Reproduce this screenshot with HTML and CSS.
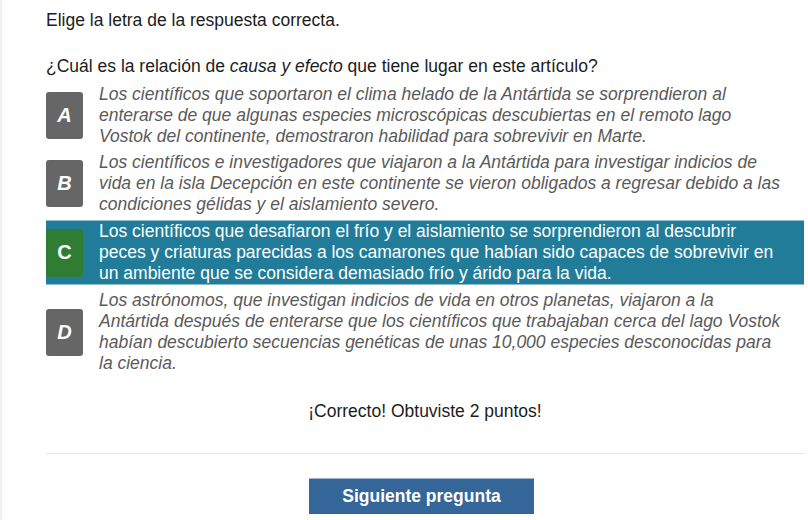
FILE: index.html
```html
<!DOCTYPE html>
<html lang="es">
<head>
<meta charset="utf-8">
<title>Pregunta</title>
<link rel="stylesheet" href="styles.css">
</head>
<body>
<div class="page">
  <p class="instr">Elige la letra de la respuesta correcta.</p>
  <p class="question">¿Cuál es la relación de <em>causa y efecto</em> que tiene lugar en este artículo?</p>
  <ul class="options">
    <li class="option">
      <span class="badge">A</span>
      <span class="text">Los científicos que soportaron el clima helado de la Antártida se sorprendieron al enterarse de que algunas especies microscópicas descubiertas en el remoto lago Vostok del continente, demostraron habilidad para sobrevivir en Marte.</span>
    </li>
    <li class="option">
      <span class="badge">B</span>
      <span class="text">Los científicos e investigadores que viajaron a la Antártida para investigar indicios de vida en la isla Decepción en este continente se vieron obligados a regresar debido a las condiciones gélidas y el aislamiento severo.</span>
    </li>
    <li class="option correct">
      <span class="badge">C</span>
      <span class="text">Los científicos que desafiaron el frío y el aislamiento se sorprendieron al descubrir peces y criaturas parecidas a los camarones que habían sido capaces de sobrevivir en un ambiente que se considera demasiado frío y árido para la vida.</span>
    </li>
    <li class="option">
      <span class="badge">D</span>
      <span class="text">Los astrónomos, que investigan indicios de vida en otros planetas, viajaron a la Antártida después de enterarse que los científicos que trabajaban cerca del lago Vostok habían descubierto secuencias genéticas de unas 10,000 especies desconocidas para la ciencia.</span>
    </li>
  </ul>
  <p class="feedback">¡Correcto! Obtuviste 2 puntos!</p>
  <hr class="divider">
  <div class="actions">
    <button class="next" type="button">Siguiente pregunta</button>
  </div>
</div>
</body>
</html>
```

FILE: styles.css
```css
html, body {
  margin: 0;
  padding: 0;
  background: #ffffff;
}

body {
  font-family: "Liberation Sans", Arial, sans-serif;
  font-size: 17.5px;
  line-height: 21px;
  color: #1c1c1c;
}

.page {
  border-left: 2px solid #f0f0f0;
  padding: 10px 4px 0 44px;
  min-height: 520px;
  box-sizing: border-box;
}

.instr {
  margin: 0 0 25px;
}

.question {
  margin: 0 0 7px;
}

.question em {
  font-style: italic;
}

.options {
  list-style: none;
  margin: 0;
  padding: 0;
  display: flex;
  flex-direction: column;
  gap: 5px;
}

.option {
  display: flex;
  align-items: center;
  gap: 16px;
  padding-right: 23px;
}

.badge {
  flex: 0 0 37px;
  height: 47px;
  border-radius: 3px;
  background: #666666;
  color: #ffffff;
  font-weight: bold;
  font-style: italic;
  font-size: 20px;
  display: flex;
  align-items: center;
  justify-content: center;
}

.text {
  flex: 1;
  font-style: italic;
  color: #5a5a5a;
}

.option.correct {
  background: #217c99;
  border-top: 1px solid #8fbccb;
  border-bottom: 1px solid #8fbccb;
}

.option.correct .badge {
  background: #2e7d32;
  font-style: normal;
  height: 48px;
}

.option.correct .text {
  color: #ffffff;
  font-style: normal;
}

.feedback {
  margin: 27px 0 0;
  text-align: center;
}

.divider {
  border: 0;
  border-top: 1px solid #e6e6e6;
  margin: 31px 0 0;
}

.actions {
  display: flex;
  justify-content: center;
  padding: 24px 7px 0 0;
}

.next {
  width: 225px;
  height: 36px;
  background: #34669a;
  color: #ffffff;
  border: 0;
  border-top: 1px solid #a2b4c8;
  font-family: "Liberation Sans", Arial, sans-serif;
  font-size: 17.5px;
  font-weight: bold;
  padding: 0;
  cursor: pointer;
}
```
